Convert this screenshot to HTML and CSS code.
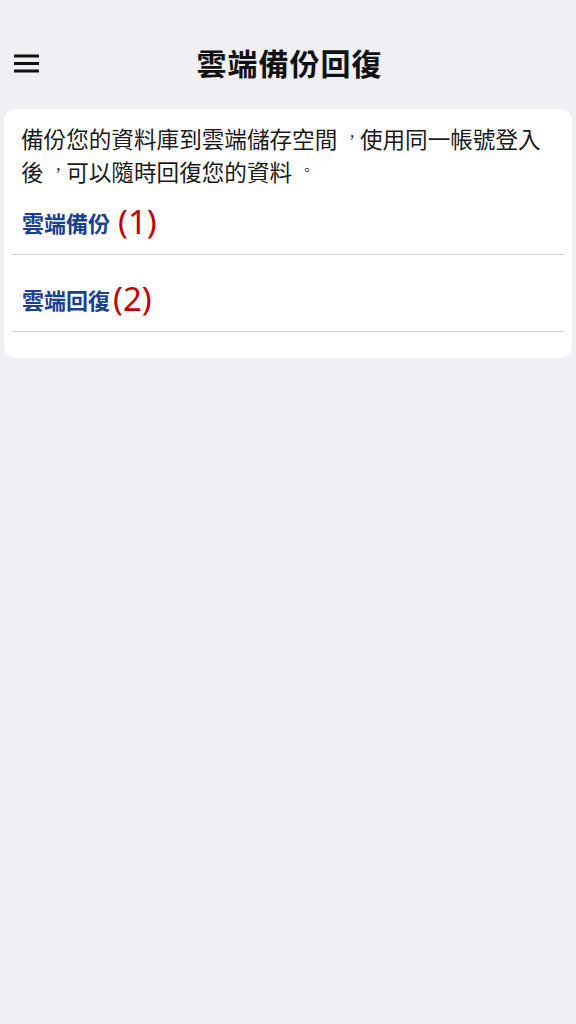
FILE: index.html
```html
<!DOCTYPE html>
<html lang="zh-TW">
<head>
<meta charset="utf-8">
<title>雲端備份回復</title>
<link rel="stylesheet" href="styles.css">
</head>
<body>
<header class="topbar">
  <button class="menu" aria-label="menu">
    <svg width="28" height="20" viewBox="0 0 28 20"><rect x="2" y="0.5" width="25" height="3" fill="#111"/><rect x="2" y="8" width="25" height="3" fill="#111"/><rect x="2" y="15.5" width="25" height="3" fill="#111"/></svg>
  </button>
  <h1 class="title">雲端備份回復</h1>
</header>
<main class="card">
  <p class="desc">備份您的資料庫到雲端儲存空間<span class="punct">，</span>使用同一帳號登入後<span class="punct">，</span>可以隨時回復您的資料<span class="punct">。</span></p>
  <ul class="list">
    <li class="item item-first"><span class="label">雲端備份</span><span class="num num-spaced">(1)</span></li>
    <li class="item"><span class="label">雲端回復</span><span class="num">(2)</span></li>
  </ul>
</main>
</body>
</html>
```
FILE: styles.css
```css
* { box-sizing: border-box; }
html, body { margin: 0; padding: 0; }
body {
  background: #efeff4;
  font-family: "Noto Sans CJK TC", "Noto Sans", sans-serif;
  color: #111;
  width: 576px;
  height: 1024px;
}
.topbar {
  position: relative;
  height: 48px;
  margin-top: 40px;
  display: flex;
  align-items: center;
  justify-content: center;
}
.menu {
  position: absolute;
  left: 12px;
  top: 14px;
  padding: 0;
  border: 0;
  background: none;
  width: 28px;
  height: 20px;
  display: block;
}
.menu svg { display: block; }
.title {
  margin: 0 0 4px 3px;
  font-size: 30px;
  letter-spacing: 1px;
  font-weight: 700;
  line-height: 44px;
  color: #111;
}
.card {
  margin: 21px 4px 0;
  background: #fff;
  border-radius: 12px;
  padding: 13px 7px 26px;
}
.desc {
  margin: 0 10px;
  font-size: 22.6px;
  line-height: 33px;
  color: #1a1a1a;
}
.punct {
  display: inline-block;
  width: 22.6px;
  font-size: 13.5px;
  line-height: 1;
  text-indent: 8px;
  letter-spacing: -1px;
  vertical-align: 6px;
  white-space: nowrap;
}
.list {
  list-style: none;
  margin: 0;
  padding: 0;
}
.item {
  display: flex;
  align-items: center;
  height: 77px;
  padding: 26px 0 14px 11px;
  border-bottom: 1px solid #d4d4d8;
}
.item-first {
  height: 67px;
  padding-top: 16px;
}
.label {
  font-size: 22px;
  font-weight: 700;
  color: #1b3f8f;
  line-height: 36px;
}
.num {
  font-family: "Noto Sans", sans-serif;
  font-size: 33px;
  color: #c00000;
  line-height: 36px;
  margin-left: 3px;
}
.num-spaced { margin-left: 8px; }
```
